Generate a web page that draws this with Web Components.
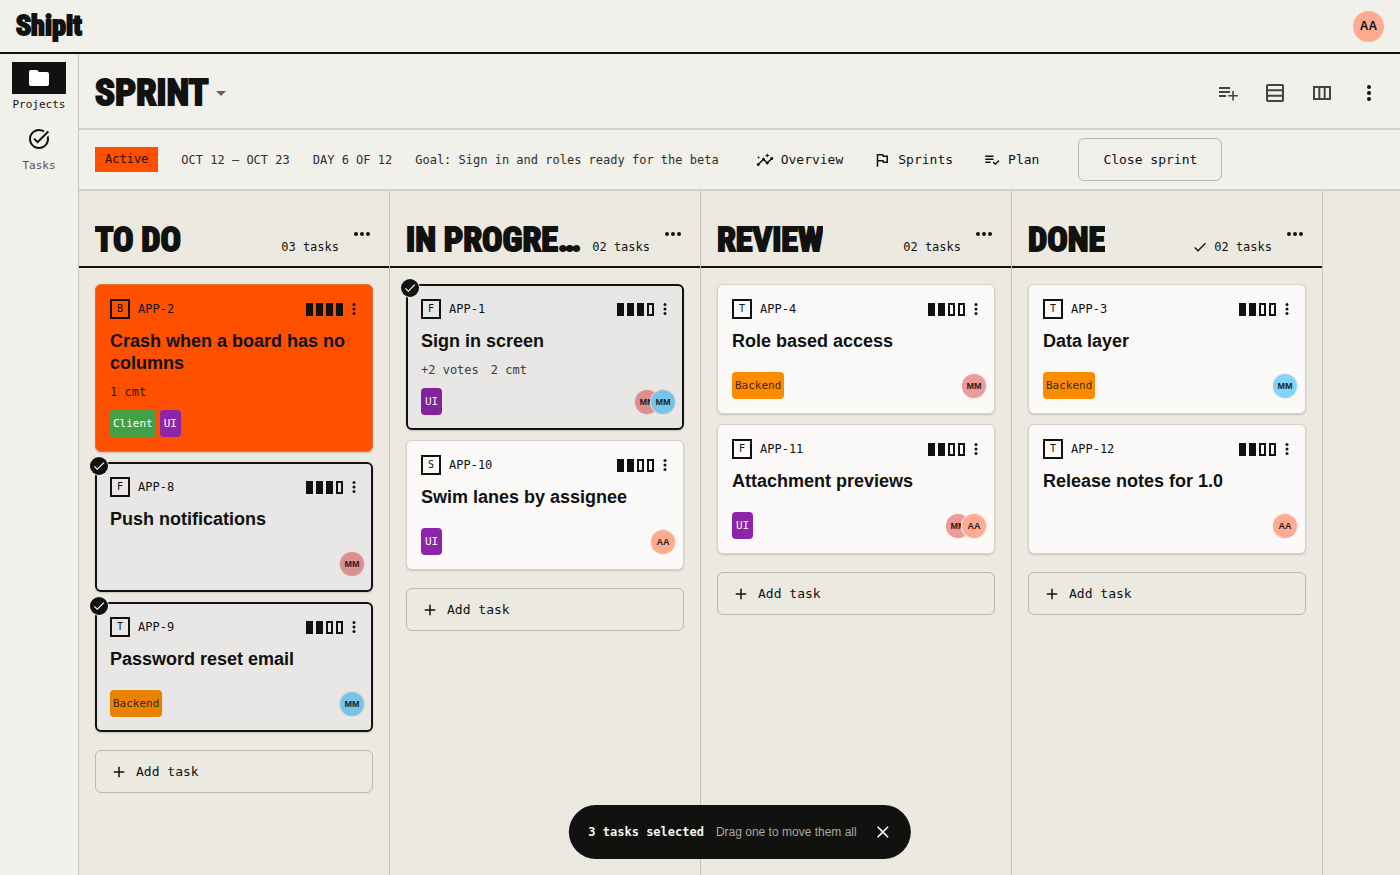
<!DOCTYPE html>
<html lang="en">
<head>
<meta charset="utf-8">
<meta name="viewport" content="width=device-width, initial-scale=1">
<title>ShipIt – Sprint</title>
<style>
  :root {
    --ink: #111110;
    --muted: #55534e;
    --paper: #f1f0eb;
    --board: #ece9e1;
    --card: #fbfaf8;
    --line: #c6c4bd;
    --rule: #d1d0c9;
    --accent: #ff5000;
    --mono: "DejaVu Sans Mono", "Liberation Mono", monospace;
    --sans: "Liberation Sans", Arial, sans-serif;
    --display: "Liberation Sans Narrow", "Roboto Condensed", "Open Sans Condensed", "DejaVu Sans Condensed", sans-serif;
  }
  body { margin: 0; background: var(--board); color: var(--ink); font-family: var(--sans); }
</style>
</head>
<body>
<ship-app></ship-app>

<script>
const ICONS = {
  folder: '<path d="M10 4H4c-1.1 0-2 .9-2 2v12c0 1.1.9 2 2 2h16c1.1 0 2-.9 2-2V8c0-1.1-.9-2-2-2h-8l-2-2z"/>',
  task: '<path d="M22 5.18 10.59 16.6l-4.24-4.24 1.41-1.41 2.83 2.83 10-10L22 5.18zm-2.21 5.04c.13.57.21 1.17.21 1.78 0 4.42-3.58 8-8 8s-8-3.58-8-8 3.58-8 8-8c1.58 0 3.04.46 4.28 1.25l1.44-1.44A9.9 9.9 0 0 0 12 2C6.48 2 2 6.48 2 12s4.48 10 10 10 10-4.48 10-10c0-1.19-.22-2.33-.6-3.39l-1.61 1.61z"/>',
  drop: '<path d="m7 10 5 5 5-5z"/>',
  listadd: '<path d="M14 10H3v2h11v-2zm0-4H3v2h11V6zm3.8 8v-4h-1.6v4h-4v1.6h4v4h1.6v-4h4V14h-4zM3 16h7v-2H3v2z"/>',
  rows: '<path d="M5 3h14a2 2 0 0 1 2 2v14a2 2 0 0 1-2 2H5a2 2 0 0 1-2-2V5a2 2 0 0 1 2-2zm0 2v3.3h14V5zm0 5.3v3.4h14v-3.4zm0 5.4V19h14v-3.3z" fill-rule="evenodd"/>',
  columns: '<path d="M3 5v14h18V5H3zm5.33 12H5V7h3.33v10zm5.34 0h-3.33V7h3.33v10zM19 17h-3.33V7H19v10z"/>',
  morev: '<circle cx="12" cy="6" r="2"/><circle cx="12" cy="12" r="2"/><circle cx="12" cy="18" r="2"/>',
  moreh: '<circle cx="6" cy="12" r="2"/><circle cx="12" cy="12" r="2"/><circle cx="18" cy="12" r="2"/>',
  insights: '<path d="M21 8c-1.45 0-2.26 1.44-1.93 2.51l-3.55 3.56c-.3-.09-.74-.09-1.04 0l-2.55-2.55C12.27 10.45 11.46 9 10 9c-1.45 0-2.27 1.44-1.93 2.52l-4.56 4.55C2.44 15.74 1 16.55 1 18c0 1.1.9 2 2 2 1.45 0 2.26-1.44 1.93-2.51l4.55-4.56c.3.09.74.09 1.04 0l2.55 2.55C12.73 16.55 13.54 18 15 18c1.45 0 2.27-1.44 1.93-2.52l3.56-3.55C21.56 12.26 23 11.45 23 10c0-1.1-.9-2-2-2z"/><path d="m15 9 .94-2.07L18 6l-2.06-.93L15 3l-.92 2.07L12 6l2.08.93zM3.5 11 4 9l2-.5L4 8l-.5-2L3 8l-2 .5L3 9z"/>',
  flag: '<path d="m12.36 6 .4 2H18v6h-3.36l-.4-2H7V6h5.36M14 4H5v17h2v-7h5.6l.4 2h7V6h-5.6L14 4z"/>',
  plan: '<path d="M3 10h11v2H3zM3 6h11v2H3zM3 14h7v2H3zM20.59 11.93l-4.25 4.24-2.12-2.12-1.41 1.41L16.34 19 22 13.34z"/>',
  add: '<path d="M19 13h-6v6h-2v-6H5v-2h6V5h2v6h6v2z"/>',
  check: '<path d="M9 16.17 4.83 12l-1.42 1.41L9 19 21 7l-1.41-1.41z"/>',
  close: '<path d="M19 6.41 17.59 5 12 10.59 6.41 5 5 6.41 10.59 12 5 17.59 6.41 19 12 13.41 17.59 19 19 17.59 13.41 12z"/>'
};

function define(name, render) {
  customElements.define(name, class extends HTMLElement {
    constructor() { super(); this.attachShadow({ mode: 'open' }); }
    connectedCallback() {
      const t = document.createElement('template');
      t.innerHTML = render(this);
      this.shadowRoot.replaceChildren(t.content.cloneNode(true));
    }
  });
}

const RESET = `
  *, *::before, *::after { box-sizing: border-box; }
  button { font: inherit; color: inherit; background: none; border: 0; margin: 0; padding: 0; cursor: pointer; }
  a { color: inherit; text-decoration: none; }
  h1, h2, h3, p, ul { margin: 0; padding: 0; font: inherit; list-style: none; }
`;

define('ship-icon', el => {
  const size = el.getAttribute('size') || 24;
  return `<style>:host { display: block; flex: none; } svg { display: block; fill: currentColor; }</style>
  <svg width="${size}" height="${size}" viewBox="0 0 24 24" aria-hidden="true">${ICONS[el.getAttribute('name')]}</svg>`;
});

define('ship-avatar', () => `
  <style>
    :host { display: flex; align-items: center; justify-content: center; flex: none;
      width: 24px; height: 24px; border-radius: 50%; box-shadow: 0 0 0 1px #f4ece6;
      background: #ffab91; color: #2a1a18; font: 700 9px/24px var(--sans); }
    :host([tone=pink]) { background: #ef9a9a; }
    :host([tone=blue]) { background: #81d4fa; color: #12242c; }
    :host([large]) { width: 31px; height: 31px; font-size: 12px; box-shadow: none; color: #111; }
  </style><slot></slot>`);

define('ship-tag', () => `
  <style>
    :host { display: flex; align-items: center; justify-content: center; box-sizing: border-box;
      height: 27px; min-width: 21px; padding: 0 3px; border-radius: 4px;
      font: 11px/16px var(--mono); color: #fff; background: #8e24aa; }
    :host([tone=green]) { background: #43a047; }
    :host([tone=amber]) { background: #fb8c00; color: #4a2500; }
  </style><slot></slot>`);

define('priority-bars', el => {
  const level = Number(el.getAttribute('level'));
  return `<style>
    :host { display: flex; gap: 3px; }
    i { box-sizing: border-box; width: 7px; height: 13px; border: 2px solid var(--ink); }
    .on { background: var(--ink); }
  </style>` + [1, 2, 3, 4].map(n => `<i class="${n <= level ? 'on' : ''}"></i>`).join('');
});

define('task-card', el => `
  <style>${RESET}
    :host { display: block; }
    article { position: relative; padding: 14px; border: 1px solid #d3d1cb; border-radius: 6px;
      background: var(--card); box-shadow: 0 1px 2px rgba(0, 0, 0, .16); }
    :host([bug]) article { background: var(--accent); border-color: #ee6a30; }
    :host([selected]) article { padding: 13px; border: 2px solid var(--ink); }
    :host([selected]) article::after { content: ""; position: absolute; inset: 0;
      border-radius: 4px; background: rgba(17, 17, 17, .08); pointer-events: none; }
    .badge { position: absolute; z-index: 1; top: -7px; left: -7px; display: grid; place-items: center;
      width: 18px; height: 18px; border-radius: 50%; background: var(--ink); color: #fff;
      box-shadow: 0 0 0 1px var(--board); }
    header { display: flex; align-items: center; height: 20px; font: 12px/20px var(--mono); }
    .type { display: grid; place-items: center; width: 20px; height: 20px; margin-right: 8px;
      border: 2px solid var(--ink); font-size: 10px; line-height: 16px; }
    priority-bars { margin-left: auto; margin-right: 2px; }
    .menu { margin-right: -5px; }
    h3 { margin-top: 11px; font: 700 18px/22px var(--sans); }
    .meta { display: flex; gap: 12px; margin: 10px 0; font: 12px/16px var(--mono); color: #45433e; }
    :host([bug]) .meta { color: #3a1500; }
    footer { display: flex; align-items: center; justify-content: space-between; height: 27px; }
    h3 + footer { margin-top: 20px; }
    .tags { display: flex; gap: 4px; }
    .people { display: flex; margin-right: -6px; }
    ::slotted(ship-avatar:not(:first-of-type)) { margin-left: -8px; }
  </style>
  <article>
    ${el.hasAttribute('selected') ? '<span class="badge"><ship-icon name="check" size="14"></ship-icon></span>' : ''}
    <header>
      <span class="type">${el.getAttribute('type')}</span><span>${el.getAttribute('key')}</span>
      <priority-bars level="${el.getAttribute('level')}"></priority-bars>
      <button class="menu" aria-label="Task menu"><ship-icon name="morev" size="18"></ship-icon></button>
    </header>
    <h3><slot></slot></h3>
    ${el.hasAttribute('meta') ? `<div class="meta">${el.getAttribute('meta').split('|').map(m => `<span>${m}</span>`).join('')}</div>` : ''}
    <footer><div class="tags"><slot name="tag"></slot></div><div class="people"><slot name="who"></slot></div></footer>
  </article>`);

define('board-column', el => `
  <style>${RESET}
    :host { display: flex; flex-direction: column; flex: 0 0 311px; box-sizing: border-box; border-right: 1px solid var(--line); }
    .head { display: flex; align-items: flex-end; height: 77px; padding: 0 15px 5px 16px; border-bottom: 2px solid var(--ink); }
    h2 { flex: 0 1 auto; min-width: 0; overflow: hidden; white-space: nowrap; text-overflow: ellipsis;
      font: 700 34px/44px var(--display); text-transform: uppercase; -webkit-text-stroke: 2px var(--ink); }
    .count { display: flex; align-items: center; gap: 6px; flex: none; margin-left: auto; padding: 0 0 5px 8px; font: 12px/18px var(--mono); }
    .menu { flex: none; margin: 0 0 15px 11px; }
    .stack { display: flex; flex-direction: column; gap: 10px; padding: 16px 16px 0; }
    .add { display: flex; align-items: center; gap: 8px; height: 43px; margin-top: 8px; padding: 0 14px;
      border: 1px solid #b9b7b0; border-radius: 6px; font: 13px/20px var(--mono); }
  </style>
  <div class="head">
    <h2>${el.getAttribute('name')}</h2>
    <span class="count">${el.hasAttribute('done') ? '<ship-icon name="check" size="16"></ship-icon>' : ''}${el.getAttribute('count')} tasks</span>
    <button class="menu" aria-label="Column menu"><ship-icon name="moreh"></ship-icon></button>
  </div>
  <div class="stack">
    <slot></slot>
    <button class="add"><ship-icon name="add" size="18"></ship-icon>Add task</button>
  </div>`);

define('ship-topbar', () => `
  <style>${RESET}
    :host { display: flex; align-items: center; justify-content: space-between; box-sizing: border-box;
      height: 54px; padding: 0 16px; background: var(--paper); border-bottom: 2px solid var(--ink); }
    .logo { font: 700 28px/48px var(--display); -webkit-text-stroke: 2px var(--ink); }
  </style>
  <a class="logo" href="#">ShipIt</a>
  <button aria-label="Account"><ship-avatar large>AA</ship-avatar></button>`);

define('ship-sidebar', () => `
  <style>${RESET}
    :host { display: block; flex: 0 0 79px; box-sizing: border-box; padding: 8px 12px;
      background: var(--paper); border-right: 1px solid var(--line); }
    nav { display: flex; flex-direction: column; gap: 8px; }
    a { display: flex; flex-direction: column; align-items: center; font: 11px/21px var(--mono); color: var(--muted); }
    .pad { display: grid; place-items: center; width: 54px; height: 32px; color: var(--ink); }
    .current { color: var(--ink); }
    .current .pad { background: var(--ink); color: #fff; }
  </style>
  <nav>
    <a class="current" href="#projects"><span class="pad"><ship-icon name="folder"></ship-icon></span>Projects</a>
    <a href="#tasks"><span class="pad"><ship-icon name="task"></ship-icon></span>Tasks</a>
  </nav>`);

define('board-header', () => `
  <style>${RESET}
    :host { display: flex; align-items: center; justify-content: space-between; box-sizing: border-box;
      height: 76px; padding: 4px 19px 0 16px; background: var(--paper); border-bottom: 2px solid var(--rule); }
    .title { display: flex; align-items: center; }
    h1 { font: 700 37px/44px var(--display); text-transform: uppercase; -webkit-text-stroke: 2px var(--ink); }
    .title ship-icon { color: #66645f; }
    .tools { display: flex; gap: 23px; color: #45433f; }
    .tools button:last-child { color: var(--ink); }
  </style>
  <button class="title"><h1>Sprint</h1><ship-icon name="drop"></ship-icon></button>
  <div class="tools">
    <button aria-label="Add to list"><ship-icon name="listadd"></ship-icon></button>
    <button aria-label="Row view"><ship-icon name="rows"></ship-icon></button>
    <button aria-label="Column view"><ship-icon name="columns"></ship-icon></button>
    <button aria-label="More"><ship-icon name="morev"></ship-icon></button>
  </div>`);

define('sprint-bar', () => `
  <style>${RESET}
    :host { display: flex; align-items: center; gap: 23px; box-sizing: border-box; height: 61px; padding: 0 16px;
      background: var(--paper); border-bottom: 2px solid var(--rule); font: 12px/16px var(--mono); color: #2f2e2a; white-space: nowrap; }
    .state { padding: 0 10px; line-height: 25px; background: var(--accent); color: #2a0d00; }
    .links { display: flex; gap: 30px; margin-left: 14px; font-size: 13px; color: var(--ink); }
    .links a { display: flex; align-items: center; gap: 7px; }
    .close { height: 43px; margin-left: 16px; padding: 0 24px; border: 1px solid #b9b7b0; border-radius: 6px; font-size: 13px; color: var(--ink); }
  </style>
  <span class="state">Active</span>
  <span>OCT 12 – OCT 23</span>
  <span>DAY 6 OF 12</span>
  <span>Goal: Sign in and roles ready for the beta</span>
  <nav class="links">
    <a href="#overview"><ship-icon name="insights" size="18"></ship-icon>Overview</a>
    <a href="#sprints"><ship-icon name="flag" size="18"></ship-icon>Sprints</a>
    <a href="#plan"><ship-icon name="plan" size="18"></ship-icon>Plan</a>
  </nav>
  <button class="close">Close sprint</button>`);

define('selection-toast', () => `
  <style>${RESET}
    :host { position: absolute; bottom: 16px; left: 50%; transform: translateX(-50%); display: flex; align-items: center;
      box-sizing: border-box; height: 54px; padding: 0 18px 0 20px; border-radius: 27px;
      background: var(--ink); color: #f6f5f1; white-space: nowrap; }
    strong { font: 700 12px/20px var(--mono); }
    span { margin-left: 12px; font: 12px/20px var(--sans); color: #a9a8a3; }
    button { margin-left: 16px; }
  </style>
  <strong>3 tasks selected</strong><span>Drag one to move them all</span>
  <button aria-label="Clear selection"><ship-icon name="close" size="20"></ship-icon></button>`);

define('ship-app', () => `
  <style>${RESET}
    :host { display: flex; flex-direction: column; min-height: 100vh; }
    .body { display: flex; flex: 1; }
    main { position: relative; display: flex; flex-direction: column; flex: 1; min-width: 0; }
    .board { display: flex; flex: 1; background: var(--board); }
  </style>
  <ship-topbar></ship-topbar>
  <div class="body">
    <ship-sidebar></ship-sidebar>
    <main>
      <board-header></board-header>
      <sprint-bar></sprint-bar>
      <div class="board">
        <board-column name="To do" count="03">
          <task-card bug type="B" key="APP-2" level="4" meta="1 cmt">Crash when a board has no columns
            <ship-tag slot="tag" tone="green">Client</ship-tag><ship-tag slot="tag">UI</ship-tag></task-card>
          <task-card selected type="F" key="APP-8" level="3">Push notifications
            <ship-avatar slot="who" tone="pink">MM</ship-avatar></task-card>
          <task-card selected type="T" key="APP-9" level="2">Password reset email
            <ship-tag slot="tag" tone="amber">Backend</ship-tag><ship-avatar slot="who" tone="blue">MM</ship-avatar></task-card>
        </board-column>
        <board-column name="In progress" count="02">
          <task-card selected type="F" key="APP-1" level="3" meta="+2 votes|2 cmt">Sign in screen
            <ship-tag slot="tag">UI</ship-tag><ship-avatar slot="who" tone="pink">MM</ship-avatar><ship-avatar slot="who" tone="blue">MM</ship-avatar></task-card>
          <task-card type="S" key="APP-10" level="2">Swim lanes by assignee
            <ship-tag slot="tag">UI</ship-tag><ship-avatar slot="who">AA</ship-avatar></task-card>
        </board-column>
        <board-column name="Review" count="02">
          <task-card type="T" key="APP-4" level="2">Role based access
            <ship-tag slot="tag" tone="amber">Backend</ship-tag><ship-avatar slot="who" tone="pink">MM</ship-avatar></task-card>
          <task-card type="F" key="APP-11" level="2">Attachment previews
            <ship-tag slot="tag">UI</ship-tag><ship-avatar slot="who" tone="pink">MM</ship-avatar><ship-avatar slot="who">AA</ship-avatar></task-card>
        </board-column>
        <board-column name="Done" count="02" done>
          <task-card type="T" key="APP-3" level="2">Data layer
            <ship-tag slot="tag" tone="amber">Backend</ship-tag><ship-avatar slot="who" tone="blue">MM</ship-avatar></task-card>
          <task-card type="T" key="APP-12" level="2">Release notes for 1.0
            <ship-avatar slot="who">AA</ship-avatar></task-card>
        </board-column>
      </div>
      <selection-toast></selection-toast>
    </main>
  </div>`);
</script>
</body>
</html>
